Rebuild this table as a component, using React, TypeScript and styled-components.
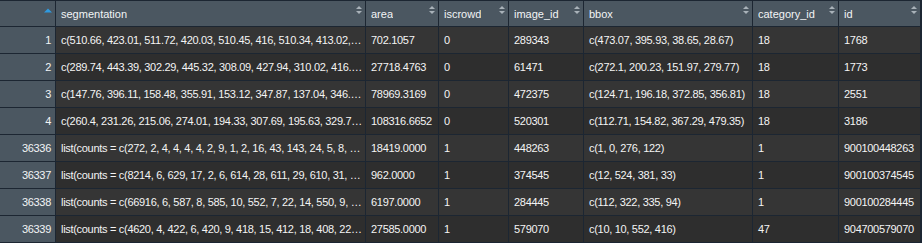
import React from "react";
import styled, { createGlobalStyle } from "styled-components";

const Global = createGlobalStyle`
  html, body { margin: 0; padding: 0; background: #1c2632; }
  body { font-family: "Liberation Sans", Arial, sans-serif; }
`;

const COLS = "55px 309px 72px 69px 74px 168px 85px 81px";

const Grid = styled.div`
  width: 922px;
  height: 243px;
  box-sizing: border-box;
  padding: 1px 1px 0 0;
  background: #1c2632;
  display: grid;
  grid-template-columns: ${COLS};
  grid-template-rows: 25px repeat(8, 26px);
  gap: 1px;
  overflow: hidden;
`;

const HeadCell = styled.div`
  background: #4b5761;
  color: #f2f4f5;
  font-size: 11px;
  display: flex;
  align-items: center;
  justify-content: space-between;
  padding: 0 3px 0 5px;
  box-sizing: border-box;
  min-width: 0;
`;

const HeadLabel = styled.span`
  white-space: nowrap;
  overflow: hidden;
  padding-top: 1px;
`;

const SortIcon = styled.svg`
  align-self: flex-start;
  margin-top: 5px;
  flex: none;
`;

const RowNum = styled.div`
  background: #4b5761;
  color: #f2f4f5;
  font-size: 11px;
  letter-spacing: -0.3px;
  display: flex;
  align-items: center;
  justify-content: flex-end;
  padding: 0 4px 0 0;
  box-sizing: border-box;
`;

const Cell = styled.div<{ $odd: boolean }>`
  background: ${(p) => (p.$odd ? "#353535" : "#2e2e2e")};
  color: #f4f4f4;
  font-size: 11px;
  letter-spacing: -0.3px;
  line-height: 26px;
  padding: 0 2px 0 5px;
  box-sizing: border-box;
  white-space: nowrap;
  overflow: hidden;
  text-overflow: ellipsis;
  min-width: 0;
`;

const Sort = () => (
  <SortIcon width="6" height="8" viewBox="0 0 6 8">
    <polygon points="0,3 3,0 6,3" fill="#a9b2b9" />
    <polygon points="0,5 6,5 3,8" fill="#a9b2b9" />
  </SortIcon>
);

const SortUp = () => (
  <SortIcon width="8" height="5" viewBox="0 0 8 5" style={{ marginTop: 7 }}>
    <polygon points="0,4.5 4,0.5 8,4.5" fill="#2f9ae0" />
  </SortIcon>
);

const headers = ["segmentation", "area", "iscrowd", "image_id", "bbox", "category_id", "id"];

const rows: [string, string, string, string, string, string, string, string][] = [
  ["1", "c(510.66, 423.01, 511.72, 420.03, 510.45, 416, 510.34, 413.02, 510.77, 410.26, 510.17)", "702.1057", "0", "289343", "c(473.07, 395.93, 38.65, 28.67)", "18", "1768"],
  ["2", "c(289.74, 443.39, 302.29, 445.32, 308.09, 427.94, 310.02, 416.46, 304.24, 405.66)", "27718.4763", "0", "61471", "c(272.1, 200.23, 151.97, 279.77)", "18", "1773"],
  ["3", "c(147.76, 396.11, 158.48, 355.91, 153.12, 347.87, 137.04, 346.26, 125.29, 339.43)", "78969.3169", "0", "472375", "c(124.71, 196.18, 372.85, 356.81)", "18", "2551"],
  ["4", "c(260.4, 231.26, 215.06, 274.01, 194.33, 307.69, 195.63, 329.72, 168.41, 345.27)", "108316.6652", "0", "520301", "c(112.71, 154.82, 367.29, 479.35)", "18", "3186"],
  ["36336", "list(counts = c(272, 2, 4, 4, 4, 4, 2, 9, 1, 2, 16, 43, 143, 24, 5, 8, 16, 44, 141))", "18419.0000", "1", "448263", "c(1, 0, 276, 122)", "1", "900100448263"],
  ["36337", "list(counts = c(8214, 6, 629, 17, 2, 6, 614, 28, 611, 29, 610, 31, 609, 32, 608))", "962.0000", "1", "374545", "c(12, 524, 381, 33)", "1", "900100374545"],
  ["36338", "list(counts = c(66916, 6, 587, 8, 585, 10, 552, 7, 22, 14, 550, 9, 21, 16, 547))", "6197.0000", "1", "284445", "c(112, 322, 335, 94)", "1", "900100284445"],
  ["36339", "list(counts = c(4620, 4, 422, 6, 420, 9, 418, 15, 412, 18, 408, 22, 404, 26))", "27585.0000", "1", "579070", "c(10, 10, 552, 416)", "47", "904700579070"],
];

export default function App() {
  return (
    <>
      <Global />
      <Grid>
        <HeadCell>
          <span />
          <SortUp />
        </HeadCell>
        {headers.map((h) => (
          <HeadCell key={h}>
            <HeadLabel>{h}</HeadLabel>
            <Sort />
          </HeadCell>
        ))}
        {rows.map((r, i) => (
          <React.Fragment key={r[0]}>
            <RowNum>{r[0]}</RowNum>
            {r.slice(1).map((v, j) => (
              <Cell key={j} $odd={i % 2 === 0}>
                {v}
              </Cell>
            ))}
          </React.Fragment>
        ))}
      </Grid>
    </>
  );
}
